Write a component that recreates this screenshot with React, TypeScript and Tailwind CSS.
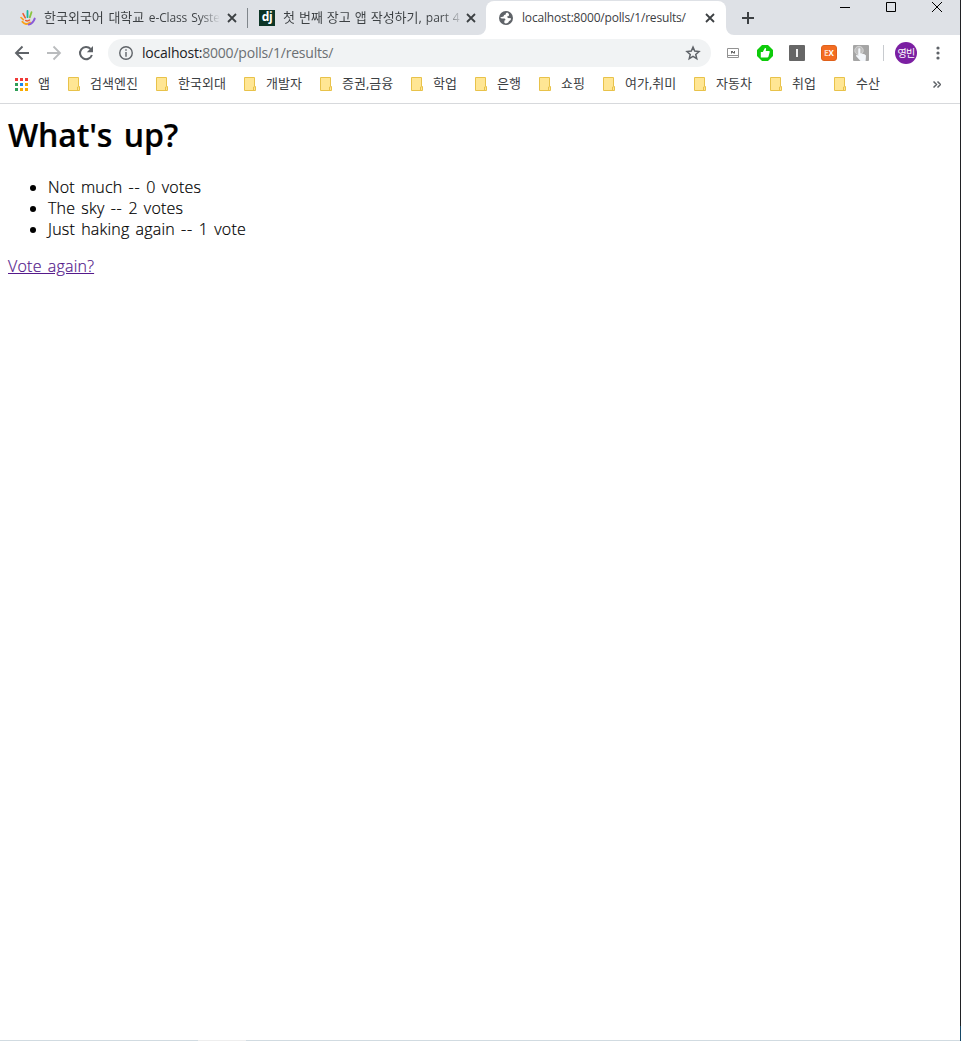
import React from 'react';

const bookmarks = [
  { label: '검색엔진', width: 'w-[88px]' },
  { label: '한국외대', width: 'w-[88px]' },
  { label: '개발자', width: 'w-[76px]' },
  { label: '증권,금융', width: 'w-[91px]' },
  { label: '학업', width: 'w-[64px]' },
  { label: '은행', width: 'w-[64px]' },
  { label: '쇼핑', width: 'w-[64px]' },
  { label: '여가,취미', width: 'w-[91px]' },
  { label: '자동차', width: 'w-[76px]' },
  { label: '취업', width: 'w-[64px]' },
  { label: '수산', width: 'w-[64px]' },
];

const appColors = [
  'bg-[#f03a37]', 'bg-[#f03a37]', 'bg-[#f03a37]',
  'bg-[#2f9e57]', 'bg-[#1a88ee]', 'bg-[#f9ab00]',
  'bg-[#2f9e57]', 'bg-[#f9ab00]', 'bg-[#f9ab00]',
];

function CloseIcon() {
  return (
    <svg className="block h-[10px] w-[10px] shrink-0" viewBox="0 0 10 10" fill="none" stroke="#3c4043" strokeWidth="1.8">
      <path d="M1 1l8 8M9 1l-8 8" />
    </svg>
  );
}

function HandIcon() {
  return (
    <svg className="block h-4 w-4 shrink-0" viewBox="0 0 16 16" fill="none" strokeLinecap="round">
      <path d="M1 7.5l2.300 2.200" stroke="#f9a11b" strokeWidth="1.600" />
      <path d="M3 3.600l2.300 4.200" stroke="#ef5b2b" strokeWidth="1.500" />
      <path d="M7.500 1v6.200" stroke="#18b7a0" strokeWidth="1.800" />
      <path d="M11.500 2.200l-1.700 5.200" stroke="#8bc53f" strokeWidth="1.800" />
      <path d="M2.400 11.800c2 2.700 5 3 7.600.6" stroke="#f9a11b" strokeWidth="1.900" />
      <path d="M5.600 10.400c1.400 1 2.700.7 4-.4" stroke="#ef5b2b" strokeWidth="1.300" />
      <path d="M14.700 8.600c-1 3-3 5.200-6 6" stroke="#8a5bd6" strokeWidth="2" />
    </svg>
  );
}

function FolderIcon() {
  return (
    <svg className="block h-[14px] w-3 shrink-0" viewBox="0 0 12 14">
      <path d="M.5.5h10v9h1v4H.5z" fill="#ffe694" stroke="#e8c24a" />
      <path d="M9.500 13.500v-3.500h1" fill="none" stroke="#e8c24a" />
    </svg>
  );
}

function TabStrip() {
  return (
    <div className="flex h-[35px] bg-[#dee1e6] text-[12px] text-[#3c4043]">
      <div className="flex h-[35px] w-[248px] items-center pl-5">
        <HandIcon />
        <span className="ml-2 w-[176px] bg-gradient-to-r from-[#3c4043] from-88% to-[#dee1e6] bg-clip-text tracking-[-0.15px] whitespace-nowrap text-transparent [word-spacing:1.2px]">
          <span className="text-[13px] tracking-[0px]">한국외국어 대학교 </span>e-Class Syste
        </span>
        <span className="ml-[7px]"><CloseIcon /></span>
        <span className="ml-auto h-5 w-px bg-[#80868b]" />
      </div>
      <div className="flex h-[35px] w-[238px] items-center pl-[11px]">
        <span className="flex h-4 w-4 shrink-0 items-center justify-center bg-[#0c3526] pb-px text-[12px] leading-none font-bold tracking-[-0.5px] text-white">dj</span>
        <span className="ml-2 w-[177px] bg-gradient-to-r from-[#3c4043] from-90% to-[#dee1e6] to-102% bg-clip-text whitespace-nowrap text-transparent [word-spacing:0.6px]">
          <span className="text-[13px]">첫 번째 장고 앱 작성하기, </span>part 4
        </span>
        <span className="ml-[6px]"><CloseIcon /></span>
      </div>
      <div className="relative mt-px flex h-[34px] w-[240px] items-center rounded-t-lg bg-white pb-px pl-3">
        <svg className="absolute bottom-0 -left-2 h-2 w-2" viewBox="0 0 8 8" fill="#fff"><path d="M8 0v8H0a8 8 0 0 0 8-8z" /></svg>
        <svg className="absolute -right-2 bottom-0 h-2 w-2" viewBox="0 0 8 8" fill="#fff"><path d="M0 0v8h8a8 8 0 0 1-8-8z" /></svg>
        <svg className="block h-4 w-4 shrink-0" viewBox="0 0 16 16">
          <circle cx="8" cy="8" r="7" fill="#5f6368" />
          <path d="M9.300 2.400C8.300 2.600 7.500 3.500 7.800 4.500 6.500 4.600 5.700 5 5.800 6.200L4 7 2.400 7.200c.3 1.200 1.300 1.500 3.300 1.400 1.300 0 2 .6 1.600 1.700l-.9.3-.1 2.200 1.300.7c2-.2 3-1 3.300-2.300L12.700 10 13 8.200 9.900 8.100 9.100 6.600l1.700-.6.2-2.100z" fill="#fff" />
        </svg>
        <span className="ml-2 w-[176px] tracking-[-0.18px] whitespace-nowrap">localhost:8000/polls/1/results/</span>
        <span className="ml-[7px]"><CloseIcon /></span>
      </div>
      <svg className="mt-3 ml-4 block h-3 w-3" viewBox="0 0 12 12" stroke="#3c4043" strokeWidth="2"><path d="M6 0v12M0 6h12" /></svg>
      <div className="ml-auto flex gap-9 pt-[2px] pr-[18px]">
        <svg className="block h-[11px] w-[10px]" viewBox="0 0 10 11" stroke="#000"><path d="M0 5.500h10" /></svg>
        <svg className="block h-[10px] w-[10px]" viewBox="0 0 10 10" fill="none" stroke="#000"><path d="M.5.5h9v9h-9z" /></svg>
        <svg className="block h-[10px] w-[10px]" viewBox="0 0 10 10" fill="none" stroke="#000"><path d="M0 0l10 10M10 0L0 10" /></svg>
      </div>
    </div>
  );
}

function Toolbar() {
  return (
    <div className="flex h-9 items-center pl-[14px]">
      <svg className="block h-4 w-4 shrink-0" viewBox="0 0 16 16" fill="none" stroke="#5f6368" strokeWidth="1.900"><path d="M15 8H2.500M8.500 1.500L2 8l6.500 6.500" /></svg>
      <svg className="ml-4 block h-4 w-4 shrink-0" viewBox="0 0 16 16" fill="none" stroke="#babcbe" strokeWidth="1.800"><path d="M1 8h12.500M7.500 1.500L14 8l-6.500 6.500" /></svg>
      <svg className="ml-4 block h-4 w-4 shrink-0" viewBox="0 0 16 16"><path d="M13.900 10A6.100 6.100 0 1 1 12.600 3.900" fill="none" stroke="#5f6368" strokeWidth="2" /><path d="M15 1v6.200H8.800z" fill="#5f6368" /></svg>
      <div className="ml-[14px] flex h-7 w-[603px] shrink-0 items-center rounded-full bg-[#f1f3f4] pl-[11px]">
        <svg className="block h-[14px] w-[14px]" viewBox="0 0 14 14"><circle cx="7" cy="7" r="6.250" fill="none" stroke="#5f6368" strokeWidth="1.400" /><path d="M6.300 3.200h1.400v1.500H6.300zM6.300 6h1.400v4.700H6.300z" fill="#5f6368" /></svg>
        <span className="ml-[9px] w-[191px] pb-px text-[14px] tracking-[-0.21px] whitespace-nowrap text-[#6b6f73]"><span className="text-[#202124]">localhost:</span>8000/polls/1/results/</span>
        <svg className="mr-[10px] ml-auto block h-4 w-4" viewBox="0 0 16 16" fill="none" stroke="#5f6368" strokeWidth="1.500"><path d="M8 2.100l1.700 4 4.300.4-3.250 2.900 1 4.200L8 11.350 4.250 13.600l1-4.200L2 6.500l4.300-.4z" /></svg>
      </div>
      <svg className="ml-4 block h-[10px] w-3" viewBox="0 0 12 10"><path d="M.5.5h11v9H.5zM1 7.500h10" fill="#fff" stroke="#929292" /><path d="M4 3h1v2.500H4zM5 3h1v1h1V3h1v2.500H7L6 5 5 4.500z" fill="#666" /></svg>
      <svg className="ml-[18px] block h-4 w-4" viewBox="0 0 16 16"><path d="M5 0h6l5 5v6l-5 5H5l-5-5V5z" fill="#0ecb0b" /><path d="M3.800 7h2L7.800 3.200c.8-.5 1.400.1 1.300.9L8.700 6H12c.7 0 .9.500.7 1.100l-1.200 4.500c-.2.700-.6 1-1.300 1H3.800z" fill="#fff" /></svg>
      <span className="ml-4 flex h-4 w-4 items-center justify-center rounded-[1px] bg-[#666]"><span className="h-2 w-[2px] bg-white/90" /></span>
      <span className="ml-4 flex h-4 w-4 items-center justify-center rounded-[3px] border border-[#df611b] bg-[#f36c21] text-[8px] leading-none font-bold text-white"><span className="text-[#ffd7bd]">E</span>X</span>
      <svg className="ml-4 block h-4 w-4" viewBox="0 0 16 16"><rect width="16" height="16" rx="1" fill="#a5a5a5" /><circle cx="6" cy="5.500" r="4.200" fill="#bdbdbd" stroke="#d4d4d4" /><path d="M5.300 4.200c0-1.400 2-1.400 2 0v4l4.200 1 1.500 1.300-.4 5.500H7.500L3.200 11.300c-.5-1 .7-1.700 1.400-1l.7.5z" fill="#f4f7fb" /></svg>
      <span className="ml-[14px] h-4 w-px bg-[#c8cbcf]" />
      <span className="ml-[11px] flex h-[22px] w-[22px] shrink-0 items-center justify-center rounded-full bg-[#7b1fa2] pb-px text-[10px] leading-none tracking-[-0.6px] whitespace-nowrap text-white">영빈</span>
      <svg className="ml-[19px] block h-[14px] w-1" viewBox="0 0 4 14" fill="#5f6368"><circle cx="2" cy="2" r="1.600" /><circle cx="2" cy="7" r="1.600" /><circle cx="2" cy="12" r="1.600" /></svg>
    </div>
  );
}

function BookmarkBar() {
  return (
    <div className="flex h-[33px] items-center border-b border-[#d7d9dc] pb-[6px] pl-[15px] text-[13px] text-[#3c4043]">
      <div className="grid h-[13px] w-[13px] shrink-0 grid-cols-3 gap-[2px]">
        {appColors.map((color, i) => <span key={i} className={color} />)}
      </div>
      <span className="ml-[10px] w-[30px] shrink-0">앱</span>
      {bookmarks.map((item) => (
        <div key={item.label} className={`flex shrink-0 items-center whitespace-nowrap ${item.width}`}>
          <FolderIcon />
          <span className="ml-[10px]">{item.label}</span>
        </div>
      ))}
      <svg className="ml-[35px] block h-[7px] w-2" viewBox="0 0 8 7" fill="none" stroke="#5f6368" strokeWidth="1.500"><path d="M.5.5l3 3-3 3M4.500.5l3 3-3 3" /></svg>
    </div>
  );
}

export default function App() {
  return (
    <div className="flex h-[1041px] w-[961px] overflow-hidden bg-white font-['Open_Sans','Noto_Sans_CJK_KR',sans-serif]">
      <div className="flex w-[960px] flex-col">
        <TabStrip />
        <Toolbar />
        <BookmarkBar />
        <main className="flex-1 px-2 text-[16px] leading-[21px] font-light tracking-[0.22px] text-black [word-spacing:1.7px] [-webkit-text-stroke:0.2px]">
          <h1 className="mt-[9px] h-[44px] w-[190px] text-[32px] leading-[43px] font-semibold tracking-[-0.16px] whitespace-nowrap [word-spacing:3.5px]">What's up?</h1>
          <ul className="mt-5 list-disc pl-10">
            <li>Not much <span className="tracking-[0.7px]">--</span> 0 votes</li>
            <li>The sky <span className="tracking-[0.7px]">--</span> 2 votes</li>
            <li>Just haking again <span className="tracking-[0.7px]">--</span> 1 vote</li>
          </ul>
          <p className="mt-4"><a href="#" className="text-[#551a8b] underline">Vote again?</a></p>
        </main>
        <div className="flex h-px bg-[#d1dbe1]"><span className="ml-[198px] h-px w-12 bg-[#eee]" /></div>
      </div>
      <div className="flex w-px flex-col bg-[#202124]"><span className="mt-auto h-[15px] bg-[#164766]" /></div>
    </div>
  );
}
